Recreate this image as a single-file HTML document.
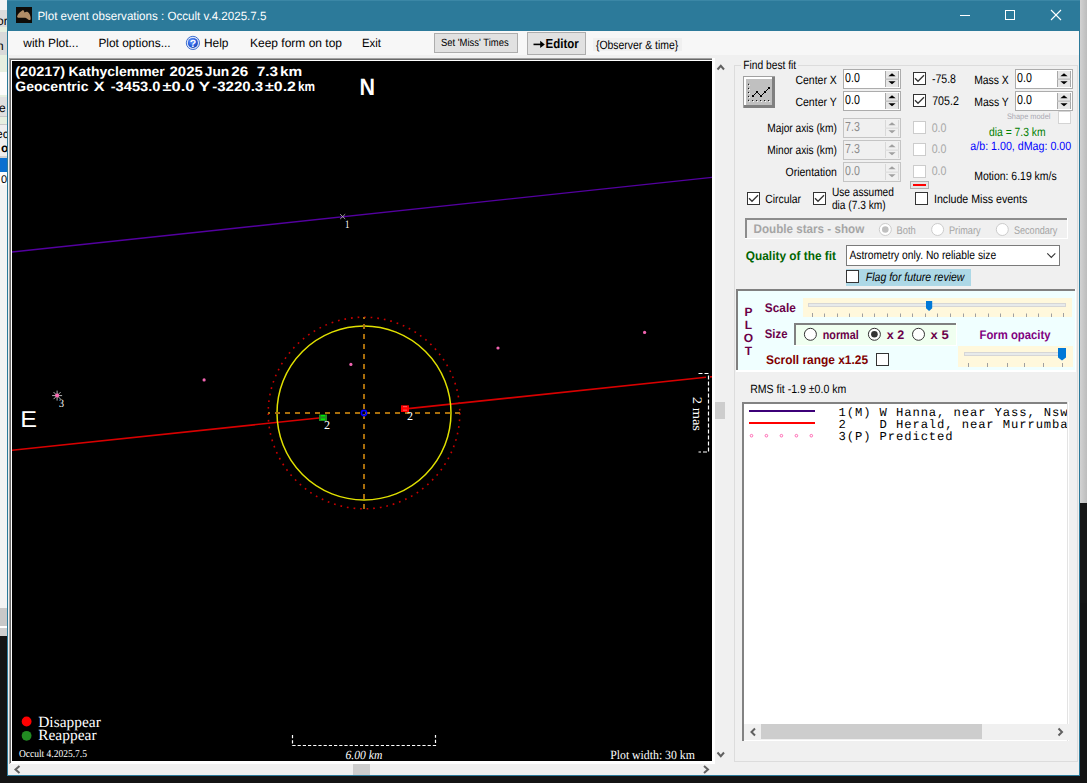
<!DOCTYPE html>
<html><head><meta charset="utf-8"><title>Plot event observations</title>
<style>html,body{margin:0;padding:0;background:#141414;overflow:hidden;width:1087px;height:783px}svg{display:block}</style>
</head><body><svg width="1087" height="783" viewBox="0 0 1087 783" text-rendering="geometricPrecision"><rect x="0" y="0" width="1087" height="783" fill="#141414"/><defs><linearGradient id="rg" x1="0" y1="0" x2="1" y2="0"><stop offset="0" stop-color="#d2d2d2"/><stop offset="1" stop-color="#bcbcbc"/></linearGradient></defs><rect x="1080" y="0" width="7" height="503" fill="url(#rg)"/><rect x="1080" y="503" width="7" height="100" fill="#161616"/><rect x="0" y="0" width="8" height="636" fill="#f0f0f0"/><rect x="0" y="0" width="8" height="10" fill="#f4f4f4"/><rect x="0" y="10" width="8" height="17" fill="#dcdcdc"/><rect x="0" y="27" width="8" height="5" fill="#e6efe0"/><rect x="0" y="32" width="8" height="23" fill="#d9d9d9"/><rect x="0" y="55" width="8" height="17" fill="#e6efe0"/><rect x="0" y="72" width="8" height="28" fill="#fbfbfb"/><rect x="0" y="95" width="8" height="2" fill="#e6efe0"/><rect x="0" y="97" width="8" height="19" fill="#e0e0e0"/><rect x="0" y="116" width="8" height="1" fill="#c8c8c8"/><rect x="0" y="117" width="8" height="7" fill="#e6efe0"/><rect x="0" y="124" width="8" height="1" fill="#c8c8c8"/><rect x="0" y="125" width="8" height="31" fill="#eeeeee"/><rect x="0" y="156" width="8" height="2" fill="#d0d0d0"/><rect x="0" y="158" width="8" height="14" fill="#0a70d0"/><rect x="0" y="172" width="8" height="13" fill="#fafafa"/><rect x="0" y="185" width="8" height="423" fill="#f3f3f3"/><rect x="0" y="608" width="8" height="18" fill="#c8c8c8"/><rect x="0" y="626" width="8" height="2" fill="#ffffff"/><rect x="0" y="628" width="8" height="8" fill="#cfcfcf"/><text x="-3" y="25" font-family="Liberation Sans" font-size="12" font-weight="normal" font-style="normal" fill="#000" text-anchor="start" >or</text><text x="-3" y="50" font-family="Liberation Sans" font-size="12" font-weight="normal" font-style="normal" fill="#000" text-anchor="start" >n</text><text x="-1" y="112.2" font-family="Liberation Sans" font-size="12" font-weight="normal" font-style="normal" fill="#000" text-anchor="start" >e</text><text x="-4" y="138" font-family="Liberation Sans" font-size="12" font-weight="normal" font-style="normal" fill="#000" text-anchor="start" >ec</text><text x="1" y="152.4" font-family="Liberation Sans" font-size="12" font-weight="bold" font-style="normal" fill="#000" text-anchor="start" >o</text><text x="1" y="182.7" font-family="Liberation Sans" font-size="11" font-weight="normal" font-style="normal" fill="#000" text-anchor="start" >0</text><rect x="7" y="0" width="1073" height="776" fill="#2c7a9a"/><rect x="7" y="0" width="1073" height="1" fill="#3b87a6"/><rect x="8" y="31" width="1071" height="744" fill="#f0f0f0"/><rect x="8" y="31" width="1071" height="24" fill="#f7f7f7"/><g><rect x="16" y="7" width="16" height="16" fill="#0e0c08"/><path d="M17.1,16.4 C17.5,14 20,12 23,10 C24,10.5 24.2,12 24.6,12.4 C25.5,12 26.8,11.5 27.7,12 C29.5,13 30.8,16 30.7,18.9 C30.5,20 29.5,20.3 28.9,20 C27.5,19 26,18 25.2,17.8 C23,17.7 21,18 19,17.8 C18,17.6 17,17.3 17.1,16.4 Z" fill="#b08d66"/></g><text x="37.4" y="20.2" font-family="Liberation Sans" font-size="12" font-weight="normal" font-style="normal" fill="#fff" text-anchor="start" textLength="229" lengthAdjust="spacingAndGlyphs" >Plot event observations : Occult v.4.2025.7.5</text><line x1="960" y1="15.5" x2="970" y2="15.5" stroke="#fff" stroke-width="1" /><rect x="1005.5" y="10.5" width="9" height="9" fill="none" stroke="#fff" stroke-width="1"/><line x1="1051" y1="10" x2="1061" y2="20" stroke="#fff" stroke-width="1.1" /><line x1="1061" y1="10" x2="1051" y2="20" stroke="#fff" stroke-width="1.1" /><text x="23.3" y="47.1" font-family="Liberation Sans" font-size="12" font-weight="normal" font-style="normal" fill="#000" text-anchor="start" textLength="55.2" lengthAdjust="spacingAndGlyphs" >with Plot...</text><text x="98.4" y="47.1" font-family="Liberation Sans" font-size="12" font-weight="normal" font-style="normal" fill="#000" text-anchor="start" textLength="72.2" lengthAdjust="spacingAndGlyphs" >Plot options...</text><defs><radialGradient id="hg" cx="0.4" cy="0.35" r="0.7"><stop offset="0" stop-color="#6fa0ff"/><stop offset="0.6" stop-color="#2a5fe0"/><stop offset="1" stop-color="#1a48b0"/></radialGradient></defs><circle cx="192.9" cy="42.9" r="6.6" fill="#dfe8f8" stroke="#3f6fd0" stroke-width="1"/><circle cx="192.9" cy="42.9" r="5" fill="url(#hg)"/><text x="192.9" y="46.9" font-family="Liberation Sans" font-size="10.5" font-weight="bold" fill="#fff" text-anchor="middle">?</text><text x="204" y="47.1" font-family="Liberation Sans" font-size="12" font-weight="normal" font-style="normal" fill="#000" text-anchor="start" textLength="24.5" lengthAdjust="spacingAndGlyphs" >Help</text><text x="250" y="47.1" font-family="Liberation Sans" font-size="12" font-weight="normal" font-style="normal" fill="#000" text-anchor="start" textLength="92" lengthAdjust="spacingAndGlyphs" >Keep form on top</text><text x="362" y="47.1" font-family="Liberation Sans" font-size="12" font-weight="normal" font-style="normal" fill="#000" text-anchor="start" textLength="19" lengthAdjust="spacingAndGlyphs" >Exit</text><rect x="434" y="33" width="84" height="20" fill="#e1e1e1"/><rect x="434.5" y="33.5" width="83" height="19" fill="none" stroke="#adadad" stroke-width="1"/><text x="441" y="45.9" font-family="Liberation Sans" font-size="10.5" font-weight="normal" font-style="normal" fill="#000" text-anchor="start" textLength="67.7" lengthAdjust="spacingAndGlyphs" >Set 'Miss' Times</text><rect x="527" y="32" width="59" height="23" fill="#e1e1e1"/><rect x="527.5" y="32.5" width="58" height="22" fill="none" stroke="#adadad" stroke-width="1"/><path d="M533.5,44.4 H543" stroke="#000" stroke-width="1.6"/><path d="M540.2,40.8 L544.8,44.4 L540.2,48 Z" fill="#000"/><text x="545.6" y="47.8" font-family="Liberation Sans" font-size="13" font-weight="bold" font-style="normal" fill="#000" text-anchor="start" textLength="33.2" lengthAdjust="spacingAndGlyphs" >Editor</text><rect x="593" y="38" width="89" height="13" fill="#f0f0f0"/><text x="595.9" y="48.9" font-family="Liberation Sans" font-size="12" font-weight="normal" font-style="normal" fill="#000" text-anchor="start" textLength="82.4" lengthAdjust="spacingAndGlyphs" >{Observer &amp; time}</text><rect x="9" y="58" width="724" height="717" fill="#f0f0f0"/><rect x="9" y="58" width="704" height="1" fill="#a0a0a0"/><rect x="9" y="58" width="1" height="706" fill="#a0a0a0"/><rect x="10" y="59" width="702" height="1" fill="#696969"/><rect x="10" y="59" width="1" height="704" fill="#696969"/><rect x="11" y="60" width="701" height="1" fill="#ffffff"/><rect x="11" y="60" width="1" height="704" fill="#ffffff"/><rect x="12" y="761" width="703" height="3" fill="#ffffff"/><rect x="712" y="58" width="3" height="706" fill="#ffffff"/><rect x="12" y="61" width="700" height="700" fill="#000"/><rect x="715" y="61" width="18" height="700" fill="#f0f0f0"/><path d="M717.5,69.5 L720.8,65.8 L724,69.5" fill="none" stroke="#606060" stroke-width="2"/><path d="M717.5,752.5 L720.8,756.2 L724,752.5" fill="none" stroke="#606060" stroke-width="2"/><rect x="715" y="402" width="10" height="17" fill="#cdcdcd"/><rect x="12" y="764" width="703" height="11" fill="#f0f0f0"/><path d="M19.5,766 L15.5,769.5 L19.5,773" fill="none" stroke="#606060" stroke-width="2"/><path d="M704,766 L708,769.5 L704,773" fill="none" stroke="#606060" stroke-width="2"/><rect x="353" y="764" width="17" height="11" fill="#cdcdcd"/><defs><clipPath id="pc"><rect x="12" y="61" width="700" height="700"/></clipPath></defs><g clip-path="url(#pc)"><line x1="11" y1="252.05325" x2="713" y2="177.29025000000001" stroke="#5400a0" stroke-width="1.4" /><line x1="11" y1="450.3" x2="319" y2="417.96000000000004" stroke="#d80000" stroke-width="1.6" /><line x1="408" y1="408.615" x2="706" y2="377.32500000000005" stroke="#d80000" stroke-width="1.6" /><line x1="710" y1="376.90500000000003" x2="713" y2="376.59000000000003" stroke="#d80000" stroke-width="1.6" /><circle cx="364" cy="413" r="95.8" fill="none" stroke="#c80000" stroke-width="1.6" stroke-dasharray="1.7 4.93"/><circle cx="364" cy="413" r="87" fill="none" stroke="#e0e000" stroke-width="1.5"/><line x1="268" y1="413" x2="460" y2="413" stroke="#a86e0c" stroke-width="2" stroke-dasharray="5 5" stroke-dashoffset="3"/><line x1="364" y1="317" x2="364" y2="509" stroke="#a86e0c" stroke-width="2" stroke-dasharray="5 5" stroke-dashoffset="3"/><circle cx="364" cy="413" r="2.6" fill="none" stroke="#0000ff" stroke-width="1.6"/><rect x="319" y="414.5" width="8" height="6.5" fill="#1f8f1f"/><rect x="321" y="415" width="4" height="1.3000000000000114" fill="#00f000"/><rect x="321" y="418.6" width="4" height="1.3999999999999773" fill="#00f000"/><rect x="401" y="405.3" width="8" height="6.699999999999989" fill="#ff0000"/><rect x="403" y="406" width="4" height="1.1999999999999886" fill="#ff5050"/><rect x="403" y="409.6" width="4" height="1.1999999999999886" fill="#ff5050"/><text x="323.9" y="429" font-family="Liberation Serif" font-size="12" font-weight="normal" font-style="normal" fill="#fff" text-anchor="start" textLength="6.1" lengthAdjust="spacingAndGlyphs" >2</text><text x="407" y="420" font-family="Liberation Serif" font-size="12" font-weight="normal" font-style="normal" fill="#fff" text-anchor="start" textLength="6" lengthAdjust="spacingAndGlyphs" >2</text><circle cx="204.1" cy="379.9" r="1.6" fill="#f064b0"/><circle cx="350.9" cy="364.4" r="1.6" fill="#f064b0"/><circle cx="498" cy="348" r="1.6" fill="#f064b0"/><circle cx="644.6" cy="332.4" r="1.6" fill="#f064b0"/><line x1="52.1" y1="395.6" x2="62.1" y2="395.6" stroke="#b4b4b4" stroke-width="1" /><line x1="53.564466094067264" y1="392.0644660940673" x2="60.63553390593274" y2="399.13553390593273" stroke="#b4b4b4" stroke-width="1" /><line x1="57.1" y1="390.6" x2="57.1" y2="400.6" stroke="#b4b4b4" stroke-width="1" /><line x1="60.63553390593274" y1="392.06446609406726" x2="53.564466094067264" y2="399.1355339059328" stroke="#b4b4b4" stroke-width="1" /><circle cx="57.1" cy="395.6" r="2" fill="#ff69b4"/><text x="59" y="406.8" font-family="Liberation Serif" font-size="11.5" font-weight="normal" font-style="normal" fill="#fff" text-anchor="start" textLength="5" lengthAdjust="spacingAndGlyphs" >3</text><line x1="340.2" y1="214.2" x2="345.2" y2="219.0" stroke="#b0b0b0" stroke-width="0.9" /><line x1="345.2" y1="214.2" x2="340.2" y2="219.0" stroke="#b0b0b0" stroke-width="0.9" /><text x="345" y="227.9" font-family="Liberation Serif" font-size="11.5" font-weight="normal" font-style="normal" fill="#fff" text-anchor="start" textLength="4.5" lengthAdjust="spacingAndGlyphs" >1</text><text x="359.4" y="95" font-family="Liberation Sans" font-size="23.5" font-weight="bold" font-style="normal" fill="#fff" text-anchor="start" textLength="15.5" lengthAdjust="spacingAndGlyphs" >N</text><text x="20.3" y="426.9" font-family="Liberation Sans" font-size="23" font-weight="normal" font-style="normal" fill="#fff" text-anchor="start" textLength="16.8" lengthAdjust="spacingAndGlyphs" >E</text><text x="15.3" y="75.6" font-family="Liberation Sans" font-size="13.5" font-weight="bold" font-style="normal" fill="#fff" text-anchor="start" textLength="49.900000000000006" lengthAdjust="spacingAndGlyphs" >(20217)</text><text x="68.5" y="75.6" font-family="Liberation Sans" font-size="13.5" font-weight="bold" font-style="normal" fill="#fff" text-anchor="start" textLength="96.30000000000001" lengthAdjust="spacingAndGlyphs" >Kathyclemmer</text><text x="169.5" y="75.6" font-family="Liberation Sans" font-size="13.5" font-weight="bold" font-style="normal" fill="#fff" text-anchor="start" textLength="33.30000000000001" lengthAdjust="spacingAndGlyphs" >2025</text><text x="204.8" y="75.6" font-family="Liberation Sans" font-size="13.5" font-weight="bold" font-style="normal" fill="#fff" text-anchor="start" textLength="24.5" lengthAdjust="spacingAndGlyphs" >Jun</text><text x="231.3" y="75.6" font-family="Liberation Sans" font-size="13.5" font-weight="bold" font-style="normal" fill="#fff" text-anchor="start" textLength="17.0" lengthAdjust="spacingAndGlyphs" >26</text><text x="256.7" y="75.6" font-family="Liberation Sans" font-size="13.5" font-weight="bold" font-style="normal" fill="#fff" text-anchor="start" textLength="21.30000000000001" lengthAdjust="spacingAndGlyphs" >7.3</text><text x="280" y="75.6" font-family="Liberation Sans" font-size="13.5" font-weight="bold" font-style="normal" fill="#fff" text-anchor="start" textLength="22.30000000000001" lengthAdjust="spacingAndGlyphs" >km</text><text x="15.3" y="90.5" font-family="Liberation Sans" font-size="13.5" font-weight="bold" font-style="normal" fill="#fff" text-anchor="start" textLength="73.2" lengthAdjust="spacingAndGlyphs" >Geocentric</text><text x="93.7" y="90.5" font-family="Liberation Sans" font-size="13.5" font-weight="bold" font-style="normal" fill="#fff" text-anchor="start" textLength="10.799999999999997" lengthAdjust="spacingAndGlyphs" >X</text><text x="110.7" y="90.5" font-family="Liberation Sans" font-size="13.5" font-weight="bold" font-style="normal" fill="#fff" text-anchor="start" textLength="49.8" lengthAdjust="spacingAndGlyphs" >-3453.0</text><text x="162.5" y="90.5" font-family="Liberation Sans" font-size="13.5" font-weight="bold" font-style="normal" fill="#fff" text-anchor="start" textLength="31.900000000000006" lengthAdjust="spacingAndGlyphs" >±0.0</text><text x="198.5" y="90.5" font-family="Liberation Sans" font-size="13.5" font-weight="bold" font-style="normal" fill="#fff" text-anchor="start" textLength="11.699999999999989" lengthAdjust="spacingAndGlyphs" >Y</text><text x="212.2" y="90.5" font-family="Liberation Sans" font-size="13.5" font-weight="bold" font-style="normal" fill="#fff" text-anchor="start" textLength="51.0" lengthAdjust="spacingAndGlyphs" >-3220.3</text><text x="265.1" y="90.5" font-family="Liberation Sans" font-size="13.5" font-weight="bold" font-style="normal" fill="#fff" text-anchor="start" textLength="30.799999999999955" lengthAdjust="spacingAndGlyphs" >±0.2</text><text x="297.9" y="90.5" font-family="Liberation Sans" font-size="13.5" font-weight="bold" font-style="normal" fill="#fff" text-anchor="start" textLength="17.100000000000023" lengthAdjust="spacingAndGlyphs" >km</text><path d="M698.5,373.5 H708.5 V452 H698.5" fill="none" stroke="#fff" stroke-width="1.2" stroke-dasharray="4 2"/><text x="0" y="0" font-family="Liberation Serif" font-size="13" fill="#fff" textLength="34.2" lengthAdjust="spacingAndGlyphs" transform="translate(692.5,396.8) rotate(90)">2 mas</text><circle cx="26.6" cy="721.5" r="4.9" fill="#ff0000"/><circle cx="26.6" cy="735.8" r="4.9" fill="#228b22"/><text x="38.2" y="727.1" font-family="Liberation Serif" font-size="15.5" font-weight="normal" font-style="normal" fill="#fff" text-anchor="start" textLength="62.6" lengthAdjust="spacingAndGlyphs" >Disappear</text><text x="38.2" y="740.4" font-family="Liberation Serif" font-size="15.5" font-weight="normal" font-style="normal" fill="#fff" text-anchor="start" textLength="58.4" lengthAdjust="spacingAndGlyphs" >Reappear</text><text x="18.9" y="756.7" font-family="Liberation Serif" font-size="10.5" font-weight="normal" font-style="normal" fill="#fff" text-anchor="start" textLength="68.1" lengthAdjust="spacingAndGlyphs" >Occult 4.2025.7.5</text><path d="M292.5,735 V745.5 H435.5 V735" fill="none" stroke="#fff" stroke-width="1.2" stroke-dasharray="3.2 2"/><text x="345.4" y="758.6" font-family="Liberation Serif" font-size="12.5" font-weight="normal" font-style="italic" fill="#fff" text-anchor="start" textLength="37" lengthAdjust="spacingAndGlyphs" >6.00 km</text><text x="610.2" y="758.7" font-family="Liberation Serif" font-size="12.5" font-weight="normal" font-style="normal" fill="#fff" text-anchor="start" textLength="84.7" lengthAdjust="spacingAndGlyphs" >Plot width: 30 km</text></g><rect x="734.5" y="65.5" width="343" height="696" fill="none" stroke="#dcdcdc" stroke-width="1"/><rect x="741" y="60" width="57" height="10" fill="#f0f0f0"/><text x="743.2" y="69.1" font-family="Liberation Sans" font-size="12" font-weight="normal" font-style="normal" fill="#000" text-anchor="start" textLength="53" lengthAdjust="spacingAndGlyphs" >Find best fit</text><rect x="743" y="76" width="32" height="32" fill="#808080"/><rect x="743" y="76" width="29" height="29" fill="#ffffff"/><rect x="743" y="76" width="32" height="1" fill="#a0a0a0"/><rect x="743" y="76" width="1" height="32" fill="#a0a0a0"/><rect x="746" y="79" width="26" height="26" fill="#c0c0c0"/><rect x="749" y="84.8" width="1" height="1.0" fill="#fff"/><rect x="748" y="83.8" width="1" height="1.0" fill="#000"/><rect x="749" y="88.9" width="1" height="1.0" fill="#fff"/><rect x="748" y="87.9" width="1" height="1.0" fill="#000"/><rect x="749" y="92.9" width="1" height="1.0" fill="#fff"/><rect x="748" y="91.9" width="1" height="1.0" fill="#000"/><rect x="749" y="96.9" width="1" height="1.0" fill="#fff"/><rect x="748" y="95.9" width="1" height="1.0" fill="#000"/><rect x="749" y="100.8" width="1" height="1.0" fill="#fff"/><rect x="748" y="99.8" width="1" height="1.0" fill="#000"/><rect x="753.1" y="101" width="1.0" height="1" fill="#fff"/><rect x="752.1" y="100" width="1.0" height="1" fill="#000"/><rect x="757.1" y="101" width="1.0" height="1" fill="#fff"/><rect x="756.1" y="100" width="1.0" height="1" fill="#000"/><rect x="761.1" y="101" width="1.0" height="1" fill="#fff"/><rect x="760.1" y="100" width="1.0" height="1" fill="#000"/><rect x="765.1" y="101" width="1.0" height="1" fill="#fff"/><rect x="764.1" y="100" width="1.0" height="1" fill="#000"/><rect x="769.1" y="101" width="1.0" height="1" fill="#fff"/><rect x="768.1" y="100" width="1.0" height="1" fill="#000"/><polyline points="753,96 757,92 761,96 765,92 769,88" fill="none" stroke="#000" stroke-width="1"/><rect x="752" y="95" width="2" height="2" fill="#000"/><rect x="756" y="91" width="2" height="2" fill="#000"/><rect x="760" y="95" width="2" height="2" fill="#000"/><rect x="764" y="91" width="2" height="2" fill="#000"/><rect x="768" y="87" width="2" height="2" fill="#000"/><text x="836.8" y="83.5" font-family="Liberation Sans" font-size="12" font-weight="normal" font-style="normal" fill="#000" text-anchor="end" textLength="41.4" lengthAdjust="spacingAndGlyphs" >Center X</text><text x="836.8" y="105.5" font-family="Liberation Sans" font-size="12" font-weight="normal" font-style="normal" fill="#000" text-anchor="end" textLength="41.4" lengthAdjust="spacingAndGlyphs" >Center Y</text><rect x="843" y="69" width="58" height="20" fill="#fff"/><rect x="843.5" y="69.5" width="57" height="19" fill="none" stroke="#acacac" stroke-width="1"/><rect x="885" y="71" width="14" height="16" fill="#e6e6e6"/><rect x="885" y="71" width="1" height="16" fill="#a8a8a8"/><rect x="898" y="71" width="1" height="16" fill="#a8a8a8"/><rect x="885" y="78.5" width="14" height="1.2999999999999972" fill="#bdbdbd"/><path d="M888.4,76.3 L892.0,73.3 L895.6,76.3 Z" fill="#000"/><path d="M888.4,81.3 L892.0,84.3 L895.6,81.3 Z" fill="#000"/><text x="845" y="82" font-family="Liberation Sans" font-size="13" font-weight="normal" font-style="normal" fill="#000" text-anchor="start" textLength="14.8" lengthAdjust="spacingAndGlyphs" >0.0</text><rect x="843" y="91" width="58" height="20" fill="#fff"/><rect x="843.5" y="91.5" width="57" height="19" fill="none" stroke="#acacac" stroke-width="1"/><rect x="885" y="93" width="14" height="16" fill="#e6e6e6"/><rect x="885" y="93" width="1" height="16" fill="#a8a8a8"/><rect x="898" y="93" width="1" height="16" fill="#a8a8a8"/><rect x="885" y="100.5" width="14" height="1.2999999999999972" fill="#bdbdbd"/><path d="M888.4,98.3 L892.0,95.3 L895.6,98.3 Z" fill="#000"/><path d="M888.4,103.3 L892.0,106.3 L895.6,103.3 Z" fill="#000"/><text x="845" y="104" font-family="Liberation Sans" font-size="13" font-weight="normal" font-style="normal" fill="#000" text-anchor="start" textLength="14.8" lengthAdjust="spacingAndGlyphs" >0.0</text><text x="836.8" y="132.4" font-family="Liberation Sans" font-size="12" font-weight="normal" font-style="normal" fill="#000" text-anchor="end" textLength="69.5" lengthAdjust="spacingAndGlyphs" >Major axis (km)</text><text x="836.8" y="154.4" font-family="Liberation Sans" font-size="12" font-weight="normal" font-style="normal" fill="#000" text-anchor="end" textLength="69.5" lengthAdjust="spacingAndGlyphs" >Minor axis (km)</text><text x="836.8" y="175.9" font-family="Liberation Sans" font-size="12" font-weight="normal" font-style="normal" fill="#000" text-anchor="end" textLength="51.3" lengthAdjust="spacingAndGlyphs" >Orientation</text><rect x="843" y="118" width="58" height="20" fill="#f0f0f0"/><rect x="843.5" y="118.5" width="57" height="19" fill="none" stroke="#c4c4c4" stroke-width="1"/><rect x="885" y="120" width="14" height="16" fill="#f0f0f0"/><rect x="885" y="120" width="1" height="16" fill="#d8d8d8"/><rect x="898" y="120" width="1" height="16" fill="#d8d8d8"/><rect x="885" y="127.5" width="14" height="1.3000000000000114" fill="#dedede"/><path d="M888.4,125.3 L892.0,122.3 L895.6,125.3 Z" fill="#a0a0a0"/><path d="M888.4,130.3 L892.0,133.3 L895.6,130.3 Z" fill="#a0a0a0"/><text x="845" y="131" font-family="Liberation Sans" font-size="13" font-weight="normal" font-style="normal" fill="#8c8c8c" text-anchor="start" textLength="14.8" lengthAdjust="spacingAndGlyphs" >7.3</text><rect x="843" y="140" width="58" height="20" fill="#f0f0f0"/><rect x="843.5" y="140.5" width="57" height="19" fill="none" stroke="#c4c4c4" stroke-width="1"/><rect x="885" y="142" width="14" height="16" fill="#f0f0f0"/><rect x="885" y="142" width="1" height="16" fill="#d8d8d8"/><rect x="898" y="142" width="1" height="16" fill="#d8d8d8"/><rect x="885" y="149.5" width="14" height="1.3000000000000114" fill="#dedede"/><path d="M888.4,147.3 L892.0,144.3 L895.6,147.3 Z" fill="#a0a0a0"/><path d="M888.4,152.3 L892.0,155.3 L895.6,152.3 Z" fill="#a0a0a0"/><text x="845" y="153" font-family="Liberation Sans" font-size="13" font-weight="normal" font-style="normal" fill="#8c8c8c" text-anchor="start" textLength="14.8" lengthAdjust="spacingAndGlyphs" >7.3</text><rect x="843" y="162" width="58" height="20" fill="#f0f0f0"/><rect x="843.5" y="162.5" width="57" height="19" fill="none" stroke="#c4c4c4" stroke-width="1"/><rect x="885" y="164" width="14" height="16" fill="#f0f0f0"/><rect x="885" y="164" width="1" height="16" fill="#d8d8d8"/><rect x="898" y="164" width="1" height="16" fill="#d8d8d8"/><rect x="885" y="171.5" width="14" height="1.3000000000000114" fill="#dedede"/><path d="M888.4,169.3 L892.0,166.3 L895.6,169.3 Z" fill="#a0a0a0"/><path d="M888.4,174.3 L892.0,177.3 L895.6,174.3 Z" fill="#a0a0a0"/><text x="845" y="175" font-family="Liberation Sans" font-size="13" font-weight="normal" font-style="normal" fill="#8c8c8c" text-anchor="start" textLength="14.8" lengthAdjust="spacingAndGlyphs" >0.0</text><rect x="913" y="72" width="13" height="13" fill="#fff"/><rect x="913.5" y="72.5" width="12" height="12" fill="none" stroke="#333333" stroke-width="1"/><path d="M915,78.3 L918,81.3 L924,75.2" fill="none" stroke="#333333" stroke-width="1.3"/><text x="931.9" y="83.1" font-family="Liberation Sans" font-size="12.5" font-weight="normal" font-style="normal" fill="#000" text-anchor="start" textLength="24.1" lengthAdjust="spacingAndGlyphs" >-75.8</text><rect x="913" y="94" width="13" height="13" fill="#fff"/><rect x="913.5" y="94.5" width="12" height="12" fill="none" stroke="#333333" stroke-width="1"/><path d="M915,100.3 L918,103.3 L924,97.2" fill="none" stroke="#333333" stroke-width="1.3"/><text x="932.2" y="105.1" font-family="Liberation Sans" font-size="12.5" font-weight="normal" font-style="normal" fill="#000" text-anchor="start" textLength="26.6" lengthAdjust="spacingAndGlyphs" >705.2</text><rect x="913" y="121" width="13" height="13" fill="#fff"/><rect x="913.5" y="121.5" width="12" height="12" fill="none" stroke="#cccccc" stroke-width="1"/><text x="931.7" y="131.6" font-family="Liberation Sans" font-size="12.5" font-weight="normal" font-style="normal" fill="#a8a8a8" text-anchor="start" textLength="14.8" lengthAdjust="spacingAndGlyphs" >0.0</text><rect x="913" y="143" width="13" height="13" fill="#fff"/><rect x="913.5" y="143.5" width="12" height="12" fill="none" stroke="#cccccc" stroke-width="1"/><text x="931.7" y="153.4" font-family="Liberation Sans" font-size="12.5" font-weight="normal" font-style="normal" fill="#a8a8a8" text-anchor="start" textLength="14.8" lengthAdjust="spacingAndGlyphs" >0.0</text><rect x="913" y="165" width="13" height="13" fill="#fff"/><rect x="913.5" y="165.5" width="12" height="12" fill="none" stroke="#cccccc" stroke-width="1"/><text x="931.7" y="175.2" font-family="Liberation Sans" font-size="12.5" font-weight="normal" font-style="normal" fill="#a8a8a8" text-anchor="start" textLength="14.8" lengthAdjust="spacingAndGlyphs" >0.0</text><text x="974.2" y="83.7" font-family="Liberation Sans" font-size="12" font-weight="normal" font-style="normal" fill="#000" text-anchor="start" textLength="34.6" lengthAdjust="spacingAndGlyphs" >Mass X</text><text x="974.2" y="105.9" font-family="Liberation Sans" font-size="12" font-weight="normal" font-style="normal" fill="#000" text-anchor="start" textLength="34.6" lengthAdjust="spacingAndGlyphs" >Mass Y</text><rect x="1015" y="69" width="58" height="20" fill="#fff"/><rect x="1015.5" y="69.5" width="57" height="19" fill="none" stroke="#acacac" stroke-width="1"/><rect x="1057" y="71" width="14" height="16" fill="#e6e6e6"/><rect x="1057" y="71" width="1" height="16" fill="#a8a8a8"/><rect x="1070" y="71" width="1" height="16" fill="#a8a8a8"/><rect x="1057" y="78.5" width="14" height="1.2999999999999972" fill="#bdbdbd"/><path d="M1060.4,76.3 L1064.0,73.3 L1067.6,76.3 Z" fill="#000"/><path d="M1060.4,81.3 L1064.0,84.3 L1067.6,81.3 Z" fill="#000"/><text x="1017" y="82" font-family="Liberation Sans" font-size="13" font-weight="normal" font-style="normal" fill="#000" text-anchor="start" textLength="14.8" lengthAdjust="spacingAndGlyphs" >0.0</text><rect x="1015" y="91" width="58" height="20" fill="#fff"/><rect x="1015.5" y="91.5" width="57" height="19" fill="none" stroke="#acacac" stroke-width="1"/><rect x="1057" y="93" width="14" height="16" fill="#e6e6e6"/><rect x="1057" y="93" width="1" height="16" fill="#a8a8a8"/><rect x="1070" y="93" width="1" height="16" fill="#a8a8a8"/><rect x="1057" y="100.5" width="14" height="1.2999999999999972" fill="#bdbdbd"/><path d="M1060.4,98.3 L1064.0,95.3 L1067.6,98.3 Z" fill="#000"/><path d="M1060.4,103.3 L1064.0,106.3 L1067.6,103.3 Z" fill="#000"/><text x="1017" y="104" font-family="Liberation Sans" font-size="13" font-weight="normal" font-style="normal" fill="#000" text-anchor="start" textLength="14.8" lengthAdjust="spacingAndGlyphs" >0.0</text><text x="1006.9" y="118.8" font-family="Liberation Sans" font-size="8" font-weight="normal" font-style="normal" fill="#a9a9b2" text-anchor="start" textLength="43.5" lengthAdjust="spacingAndGlyphs" >Shape model</text><rect x="1058" y="111" width="13" height="13" fill="#fff"/><rect x="1058.5" y="111.5" width="12" height="12" fill="none" stroke="#d4d4d4" stroke-width="1"/><text x="989" y="135.8" font-family="Liberation Sans" font-size="12" font-weight="normal" font-style="normal" fill="#008000" text-anchor="start" textLength="56.5" lengthAdjust="spacingAndGlyphs" >dia = 7.3 km</text><text x="970.3" y="149.6" font-family="Liberation Sans" font-size="12" font-weight="normal" font-style="normal" fill="#0000ff" text-anchor="start" textLength="100.9" lengthAdjust="spacingAndGlyphs" >a/b: 1.00, dMag: 0.00</text><text x="974.2" y="179.7" font-family="Liberation Sans" font-size="12" font-weight="normal" font-style="normal" fill="#000" text-anchor="start" textLength="82.5" lengthAdjust="spacingAndGlyphs" >Motion: 6.19 km/s</text><rect x="910" y="181" width="19" height="8" fill="#e6e6e6"/><rect x="910.5" y="181.5" width="18" height="7" fill="none" stroke="#b0b0b0" stroke-width="1"/><rect x="913" y="184" width="13" height="2" fill="#ff0000"/><rect x="747" y="192" width="13" height="13" fill="#fff"/><rect x="747.5" y="192.5" width="12" height="12" fill="none" stroke="#333333" stroke-width="1"/><path d="M749,198.3 L752,201.3 L758,195.2" fill="none" stroke="#333333" stroke-width="1.3"/><text x="765.2" y="202.7" font-family="Liberation Sans" font-size="12" font-weight="normal" font-style="normal" fill="#000" text-anchor="start" textLength="35.8" lengthAdjust="spacingAndGlyphs" >Circular</text><rect x="813" y="192" width="13" height="13" fill="#fff"/><rect x="813.5" y="192.5" width="12" height="12" fill="none" stroke="#333333" stroke-width="1"/><path d="M815,198.3 L818,201.3 L824,195.2" fill="none" stroke="#333333" stroke-width="1.3"/><text x="831.9" y="196" font-family="Liberation Sans" font-size="12" font-weight="normal" font-style="normal" fill="#000" text-anchor="start" textLength="62" lengthAdjust="spacingAndGlyphs" >Use assumed</text><text x="831.9" y="208.9" font-family="Liberation Sans" font-size="12" font-weight="normal" font-style="normal" fill="#000" text-anchor="start" textLength="53.8" lengthAdjust="spacingAndGlyphs" >dia (7.3 km)</text><rect x="915" y="192" width="13" height="13" fill="#fff"/><rect x="915.5" y="192.5" width="12" height="12" fill="none" stroke="#333333" stroke-width="1"/><text x="934" y="202.5" font-family="Liberation Sans" font-size="12" font-weight="normal" font-style="normal" fill="#000" text-anchor="start" textLength="93.3" lengthAdjust="spacingAndGlyphs" >Include Miss events</text><rect x="745" y="218" width="323" height="21" fill="#f0f0f0"/><rect x="745" y="218" width="322" height="2" fill="#8c8c8c"/><rect x="745" y="218" width="2" height="21" fill="#8c8c8c"/><rect x="745" y="238" width="323" height="1" fill="#ffffff"/><rect x="1067" y="218" width="1" height="21" fill="#ffffff"/><text x="753.5" y="232.8" font-family="Liberation Sans" font-size="12.5" font-weight="bold" font-style="normal" fill="#a5a5a5" text-anchor="start" textLength="110.7" lengthAdjust="spacingAndGlyphs" >Double stars - show</text><circle cx="885.3" cy="229.5" r="6" fill="#fff" stroke="#cccccc" stroke-width="1"/><circle cx="885.3" cy="229.5" r="3.3" fill="#c0c0c0"/><text x="896.5" y="234.2" font-family="Liberation Sans" font-size="11" font-weight="normal" font-style="normal" fill="#a5a5a5" text-anchor="start" textLength="19.3" lengthAdjust="spacingAndGlyphs" >Both</text><circle cx="937.6" cy="229.5" r="6" fill="#fff" stroke="#cccccc" stroke-width="1"/><text x="949" y="234.2" font-family="Liberation Sans" font-size="11" font-weight="normal" font-style="normal" fill="#a5a5a5" text-anchor="start" textLength="31.5" lengthAdjust="spacingAndGlyphs" >Primary</text><circle cx="1002.3" cy="229.5" r="6" fill="#fff" stroke="#cccccc" stroke-width="1"/><text x="1013.9" y="234.2" font-family="Liberation Sans" font-size="11" font-weight="normal" font-style="normal" fill="#a5a5a5" text-anchor="start" textLength="43.5" lengthAdjust="spacingAndGlyphs" >Secondary</text><text x="745.8" y="259.6" font-family="Liberation Sans" font-size="12.5" font-weight="bold" font-style="normal" fill="#006400" text-anchor="start" textLength="90.2" lengthAdjust="spacingAndGlyphs" >Quality of the fit</text><rect x="846" y="245" width="214" height="21" fill="#fff"/><rect x="846.5" y="245.5" width="213" height="20" fill="none" stroke="#7a7a7a" stroke-width="1"/><text x="849.5" y="259" font-family="Liberation Sans" font-size="12" font-weight="normal" font-style="normal" fill="#000" text-anchor="start" textLength="146.7" lengthAdjust="spacingAndGlyphs" >Astrometry only. No reliable size</text><path d="M1047.3,253.3 L1051.3,257.5 L1055.3,253.3" fill="none" stroke="#333" stroke-width="1.1"/><rect x="846" y="269" width="125" height="17" fill="#add8e6"/><rect x="846" y="270" width="13" height="13" fill="#fff"/><rect x="846.5" y="270.5" width="12" height="12" fill="none" stroke="#333333" stroke-width="1"/><text x="865.8" y="280.6" font-family="Liberation Sans" font-size="12" font-weight="normal" font-style="italic" fill="#000" text-anchor="start" textLength="98.6" lengthAdjust="spacingAndGlyphs" >Flag for future review</text><rect x="736" y="289" width="339" height="82" fill="#f0ffff"/><rect x="736" y="289" width="339" height="2" fill="#808080"/><rect x="736" y="289" width="2" height="82" fill="#808080"/><rect x="736" y="370" width="340" height="2" fill="#ffffff"/><rect x="1075" y="289" width="1" height="83" fill="#ffffff"/><text x="748.5" y="315.6" font-family="Liberation Sans" font-size="12" font-weight="bold" font-style="normal" fill="#6a0048" text-anchor="middle" >P</text><text x="748.5" y="329" font-family="Liberation Sans" font-size="12" font-weight="bold" font-style="normal" fill="#6a0048" text-anchor="middle" >L</text><text x="748.5" y="342" font-family="Liberation Sans" font-size="12" font-weight="bold" font-style="normal" fill="#6a0048" text-anchor="middle" >O</text><text x="748.5" y="355" font-family="Liberation Sans" font-size="12" font-weight="bold" font-style="normal" fill="#6a0048" text-anchor="middle" >T</text><text x="764.8" y="311.5" font-family="Liberation Sans" font-size="12.5" font-weight="bold" font-style="normal" fill="#6a0048" text-anchor="start" textLength="31" lengthAdjust="spacingAndGlyphs" >Scale</text><rect x="803" y="298" width="269" height="19" fill="#fff8dc"/><rect x="808" y="303" width="258" height="4" fill="#e7eaea"/><rect x="808.5" y="303.5" width="257" height="3" fill="none" stroke="#d6d6d6" stroke-width="1"/><rect x="812" y="313" width="1" height="4" fill="#a0a0a0"/><rect x="824" y="313.5" width="1" height="3.5" fill="#a0a0a0"/><rect x="837" y="313.5" width="1" height="3.5" fill="#a0a0a0"/><rect x="849" y="313.5" width="1" height="3.5" fill="#a0a0a0"/><rect x="862" y="313.5" width="1" height="3.5" fill="#a0a0a0"/><rect x="874" y="313.5" width="1" height="3.5" fill="#a0a0a0"/><rect x="887" y="313.5" width="1" height="3.5" fill="#a0a0a0"/><rect x="900" y="313.5" width="1" height="3.5" fill="#a0a0a0"/><rect x="912" y="313.5" width="1" height="3.5" fill="#a0a0a0"/><rect x="925" y="313.5" width="1" height="3.5" fill="#a0a0a0"/><rect x="937" y="313.5" width="1" height="3.5" fill="#a0a0a0"/><rect x="950" y="313.5" width="1" height="3.5" fill="#a0a0a0"/><rect x="963" y="313.5" width="1" height="3.5" fill="#a0a0a0"/><rect x="975" y="313.5" width="1" height="3.5" fill="#a0a0a0"/><rect x="988" y="313.5" width="1" height="3.5" fill="#a0a0a0"/><rect x="1000" y="313.5" width="1" height="3.5" fill="#a0a0a0"/><rect x="1013" y="313.5" width="1" height="3.5" fill="#a0a0a0"/><rect x="1026" y="313.5" width="1" height="3.5" fill="#a0a0a0"/><rect x="1038" y="313.5" width="1" height="3.5" fill="#a0a0a0"/><rect x="1051" y="313.5" width="1" height="3.5" fill="#a0a0a0"/><rect x="1063" y="313" width="1" height="4" fill="#a0a0a0"/><path d="M926,301 H932.2 V308.3 L929.1,311 L926,308.3 Z" fill="#0078d7"/><text x="764.8" y="338" font-family="Liberation Sans" font-size="12.5" font-weight="bold" font-style="normal" fill="#6a0048" text-anchor="start" textLength="22.7" lengthAdjust="spacingAndGlyphs" >Size</text><rect x="794" y="323" width="163" height="23" fill="#f0fff0"/><rect x="794" y="323" width="163" height="2" fill="#808080"/><rect x="794" y="323" width="2" height="23" fill="#808080"/><rect x="794" y="345" width="163" height="1" fill="#ffffff"/><rect x="956" y="323" width="1" height="23" fill="#ffffff"/><circle cx="810.4" cy="334.3" r="6" fill="#fff" stroke="#333" stroke-width="1"/><text x="822.7" y="338.8" font-family="Liberation Sans" font-size="12.5" font-weight="bold" font-style="normal" fill="#6a0048" text-anchor="start" textLength="36" lengthAdjust="spacingAndGlyphs" >normal</text><circle cx="874.4" cy="334.3" r="6" fill="#fff" stroke="#333" stroke-width="1"/><circle cx="874.4" cy="334.3" r="3.3" fill="#333"/><text x="886.8" y="338.8" font-family="Liberation Sans" font-size="12.5" font-weight="bold" font-style="normal" fill="#6a0048" text-anchor="start" textLength="17.4" lengthAdjust="spacingAndGlyphs" >x 2</text><circle cx="918.5" cy="334.3" r="6" fill="#fff" stroke="#333" stroke-width="1"/><text x="930.6" y="338.8" font-family="Liberation Sans" font-size="12.5" font-weight="bold" font-style="normal" fill="#6a0048" text-anchor="start" textLength="18.1" lengthAdjust="spacingAndGlyphs" >x 5</text><text x="979.5" y="339.2" font-family="Liberation Sans" font-size="12.5" font-weight="bold" font-style="normal" fill="#800080" text-anchor="start" textLength="71" lengthAdjust="spacingAndGlyphs" >Form opacity</text><rect x="958" y="346" width="115" height="21" fill="#fff8dc"/><rect x="964" y="352" width="101" height="4" fill="#e7eaea"/><rect x="964.5" y="352.5" width="100" height="3" fill="none" stroke="#d6d6d6" stroke-width="1"/><rect x="968" y="363" width="1" height="4" fill="#a0a0a0"/><rect x="987" y="363" width="1" height="4" fill="#a0a0a0"/><rect x="1007" y="363" width="1" height="4" fill="#a0a0a0"/><rect x="1024" y="363" width="1" height="4" fill="#a0a0a0"/><rect x="1043" y="363" width="1" height="4" fill="#a0a0a0"/><rect x="1062" y="363" width="1" height="4" fill="#a0a0a0"/><path d="M1058,348 H1066 V357.5 L1062,360.5 L1058,357.5 Z" fill="#0078d7"/><text x="766" y="363.7" font-family="Liberation Sans" font-size="12.5" font-weight="bold" font-style="normal" fill="#800000" text-anchor="start" textLength="102.1" lengthAdjust="spacingAndGlyphs" >Scroll range x1.25</text><rect x="876" y="353" width="13" height="13" fill="#fff"/><rect x="876.5" y="353.5" width="12" height="12" fill="none" stroke="#333333" stroke-width="1"/><text x="750.2" y="392.7" font-family="Liberation Sans" font-size="12" font-weight="normal" font-style="normal" fill="#000" text-anchor="start" textLength="96.1" lengthAdjust="spacingAndGlyphs" >RMS fit -1.9 ±0.0 km</text><rect x="742" y="402" width="327" height="339" fill="#ffffff"/><rect x="742" y="402" width="326" height="2" fill="#828282"/><rect x="742" y="402" width="2" height="339" fill="#828282"/><rect x="1067" y="402" width="1" height="339" fill="#e3e3e3"/><rect x="1068" y="402" width="1" height="339" fill="#ffffff"/><rect x="1069" y="402" width="2" height="339" fill="#f0f0f0"/><rect x="744" y="724" width="325" height="16" fill="#f0f0f0"/><rect x="761" y="724" width="221" height="15" fill="#cdcdcd"/><path d="M755,728.5 L751.5,732 L755,735.5" fill="none" stroke="#606060" stroke-width="2"/><path d="M1058.5,728.5 L1062,732 L1058.5,735.5" fill="none" stroke="#606060" stroke-width="2"/><rect x="749" y="410" width="66" height="2" fill="#3c0078"/><rect x="749" y="422" width="66" height="2" fill="#ff0000"/><circle cx="751.5" cy="435.7" r="1.3" fill="none" stroke="#ff69b4" stroke-width="1"/><circle cx="766.4" cy="435.7" r="1.3" fill="none" stroke="#ff69b4" stroke-width="1"/><circle cx="781.4" cy="435.7" r="1.3" fill="none" stroke="#ff69b4" stroke-width="1"/><circle cx="796.4" cy="435.7" r="1.3" fill="none" stroke="#ff69b4" stroke-width="1"/><circle cx="811.3" cy="435.7" r="1.3" fill="none" stroke="#ff69b4" stroke-width="1"/><defs><clipPath id="lc"><rect x="744" y="404" width="323" height="320"/></clipPath></defs><g clip-path="url(#lc)" font-family="Liberation Mono" font-size="12.2" letter-spacing="0.9" fill="#000"><text x="838.5" y="415.9" xml:space="preserve">1(M) W Hanna, near Yass, Nsw</text><text x="838.5" y="428" xml:space="preserve">2    D Herald, near Murrumba</text><text x="838.5" y="439.9" xml:space="preserve">3(P) Predicted</text></g></svg></body></html>
